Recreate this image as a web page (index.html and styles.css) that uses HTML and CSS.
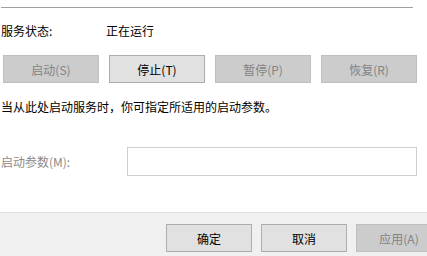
FILE: index.html
```html
<!DOCTYPE html>
<html lang="zh">
<head>
    <meta charset="UTF-8">
    <title>服务属性</title>
    <link rel="stylesheet" href="styles.css">
</head>
<body>
    <div class="dialog">
        <div class="content">
            <div class="sep"></div>

            <div class="status-row">
                <span class="status-label">服务状态:</span>
                <span class="status-value">正在运行</span>
            </div>

            <div class="btn-row">
                <button class="btn" disabled>启动(S)</button>
                <button class="btn">停止(T)</button>
                <button class="btn" disabled>暂停(P)</button>
                <button class="btn" disabled>恢复(R)</button>
            </div>

            <p class="hint">当从此处启动服务时，你可指定所适用的启动参数。</p>

            <div class="param-row">
                <label class="param-label" for="params">启动参数(M):</label>
                <input type="text" id="params" class="param-input" disabled>
            </div>
        </div>

        <!-- 底部按钮 -->
        <div class="footer">
            <button class="btn btn-wide">确定</button>
            <button class="btn btn-wide">取消</button>
            <button class="btn btn-wide" disabled>应用(A)</button>
        </div>
    </div>
</body>
</html>
```

FILE: styles.css
```css
html, body {
    margin: 0;
    padding: 0;
    background-color: #fff;
    overflow: hidden;
}
body {
    font-family: 'Noto Sans CJK SC', 'Liberation Sans', sans-serif;
    font-size: 12px;
    color: #000;
}
.dialog {
    width: 427px;
    height: 256px;
    display: flex;
    flex-direction: column;
}
.content {
    padding: 7px 0 0 1px;
    height: 205px;
}
.sep {
    width: 412px;
    height: 1px;
    background-color: #a0a0a0;
}
.status-row {
    display: flex;
    margin-top: 15px;
    line-height: 16px;
}
.status-label {
    width: 105px;
}
.btn-row {
    display: flex;
    gap: 10px;
    margin: 16px 0 0 2px;
}
.btn {
    width: 96px;
    height: 28px;
    padding: 0;
    font-family: inherit;
    font-size: 12px;
    color: #000;
    background-color: #e1e1e1;
    border: 1px solid #adadad;
    box-sizing: border-box;
}
.btn:disabled {
    color: #838383;
    background-color: #cccccc;
    border-color: #bfbfbf;
}
.hint {
    margin: 16px 0 0;
    line-height: 16px;
}
.param-row {
    display: flex;
    align-items: center;
    margin-top: 32px;
}
.param-label {
    width: 126px;
    color: #8a8a8a;
}
.param-input {
    width: 290px;
    height: 29px;
    margin: 0;
    border: 1px solid #cfcfcf;
    background-color: #fff;
    box-sizing: border-box;
}
.footer {
    flex: 1;
    display: flex;
    gap: 9px;
    padding: 11px 0 0 166px;
    background-color: #f0f0f0;
    border-top: 1px solid #dfdfdf;
}
.btn-wide {
    width: 86px;
    flex-shrink: 0;
}
```
